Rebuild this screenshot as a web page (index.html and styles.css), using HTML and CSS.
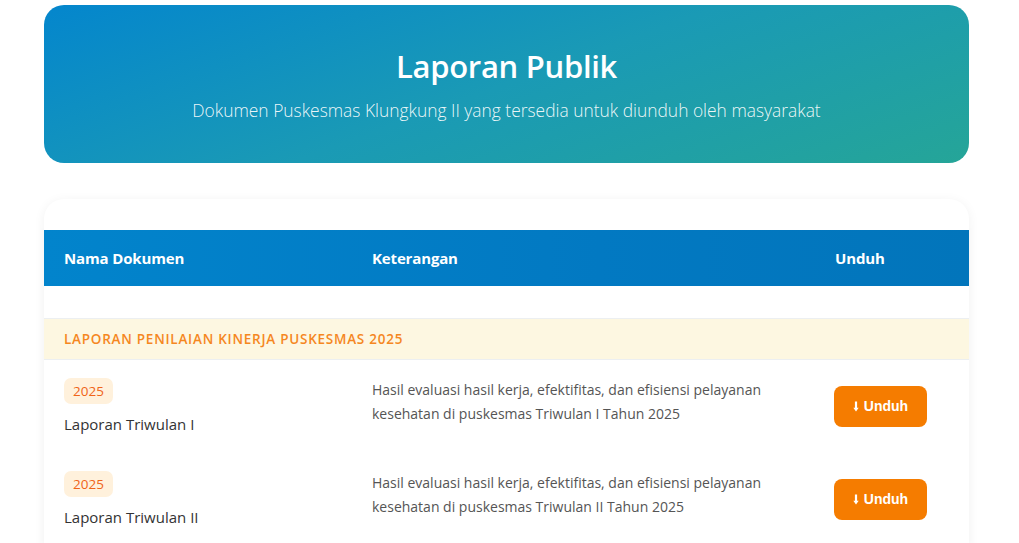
FILE: index.html
```html
<!DOCTYPE html>
<html lang="id">
<head>
<meta charset="utf-8">
<title>Laporan Publik</title>
<link rel="stylesheet" href="styles.css">
</head>
<body>
<div class="page">
  <header class="hero">
    <h1 class="hero-title">Laporan Publik</h1>
    <p class="hero-sub">Dokumen Puskesmas Klungkung II yang tersedia untuk diunduh oleh masyarakat</p>
  </header>

  <section class="card">
    <table class="docs">
      <colgroup>
        <col class="c-name">
        <col class="c-desc">
        <col class="c-dl">
      </colgroup>
      <thead>
        <tr>
          <th>Nama Dokumen</th>
          <th>Keterangan</th>
          <th>Unduh</th>
        </tr>
      </thead>
      <tbody>
        <tr class="spacer"><td colspan="3"></td></tr>
        <tr class="category"><td colspan="3">LAPORAN PENILAIAN KINERJA PUSKESMAS 2025</td></tr>
        <tr class="doc">
          <td>
            <span class="badge">2025</span>
            <div class="doc-name">Laporan Triwulan I</div>
          </td>
          <td class="desc">Hasil evaluasi hasil kerja, efektifitas, dan efisiensi pelayanan kesehatan di puskesmas Triwulan I Tahun 2025</td>
          <td class="dl"><button class="btn"><svg class="arrow" viewBox="0 0 6 11" width="6" height="11"><path d="M3 0.5V8" stroke="#fff" stroke-width="2.2" fill="none"/><path d="M0.3 6.8L3 10.6L5.7 6.8Z" fill="#fff"/></svg>Unduh</button></td>
        </tr>
        <tr class="doc">
          <td>
            <span class="badge">2025</span>
            <div class="doc-name">Laporan Triwulan II</div>
          </td>
          <td class="desc">Hasil evaluasi hasil kerja, efektifitas, dan efisiensi pelayanan kesehatan di puskesmas Triwulan II Tahun 2025</td>
          <td class="dl"><button class="btn"><svg class="arrow" viewBox="0 0 6 11" width="6" height="11"><path d="M3 0.5V8" stroke="#fff" stroke-width="2.2" fill="none"/><path d="M0.3 6.8L3 10.6L5.7 6.8Z" fill="#fff"/></svg>Unduh</button></td>
        </tr>
      </tbody>
    </table>
  </section>
</div>
</body>
</html>
```

FILE: styles.css
```css
* { box-sizing: border-box; }

html, body {
  margin: 0;
  padding: 0;
  background: #ffffff;
  overflow: hidden;
}

body {
  font-family: "Open Sans", "Noto Sans", sans-serif;
  color: #333;
}

.page {
  width: 925px;
  margin: 0 0 0 44px;
  padding-top: 5px;
}

.hero {
  height: 158px;
  border-radius: 20px;
  background: linear-gradient(160deg, #0486cd 0%, #1a9ab5 50%, #25a598 100%);
  color: #fff;
  text-align: center;
  padding-top: 40px;
}

.hero-title {
  margin: 0;
  font-size: 31px;
  font-weight: 600;
  line-height: 42px;
  letter-spacing: -0.3px;
}

.hero-sub {
  margin: 11px 0 0;
  font-size: 17.4px;
  font-weight: 300;
  line-height: 24px;
  color: rgba(255,255,255,0.92);
}

.card {
  margin-top: 36px;
  background: #fff;
  border-radius: 20px;
  padding-top: 31px;
  box-shadow: 0 2px 12px rgba(0,0,0,0.06);
  overflow: hidden;
  padding-bottom: 20px;
}

.docs {
  width: 100%;
  border-collapse: collapse;
  table-layout: fixed;
}

.c-name { width: 308px; }
.c-desc { width: 463px; }
.c-dl { width: 154px; }

.docs thead tr {
  background: linear-gradient(90deg, #0284cc 0%, #0279c2 60%, #0275bb 100%);
}

.docs th {
  height: 56px;
  padding: 0 20px;
  text-align: left;
  color: #fff;
  font-size: 15px;
  font-weight: 700;
  letter-spacing: -0.15px;
}

.spacer td {
  height: 32px;
  padding: 0;
  border-bottom: 1px solid #eceff1;
}

.category td {
  height: 41px;
  padding: 0 20px;
  background: #fdf7e1;
  color: #f5871f;
  font-size: 13.5px;
  font-weight: 600;
  letter-spacing: 0.75px;
  border-bottom: 1px solid #eceff1;
}

.doc td {
  padding: 18px 20px;
  vertical-align: top;
}

.badge {
  display: inline-block;
  height: 26px;
  line-height: 26px;
  padding: 0 9px;
  border-radius: 7px;
  background: #fff1dc;
  color: #f06418;
  font-size: 13.5px;
}

.doc-name {
  margin-top: 9px;
  font-size: 15px;
  line-height: 22px;
  color: #333;
}

.desc {
  font-size: 14px;
  line-height: 24px;
  color: #555;
}

.doc td.dl {
  vertical-align: middle;
  padding-left: 19px;
}

.btn {
  display: inline-flex;
  align-items: center;
  gap: 5px;
  height: 41px;
  width: 93px;
  justify-content: center;
  border: none;
  border-radius: 8px;
  background: #f57c00;
  color: #fff;
  font-family: "Liberation Sans", Arial, sans-serif;
  font-size: 14px;
  font-weight: 700;
  padding: 0;
}

.arrow { display: block; }
```
